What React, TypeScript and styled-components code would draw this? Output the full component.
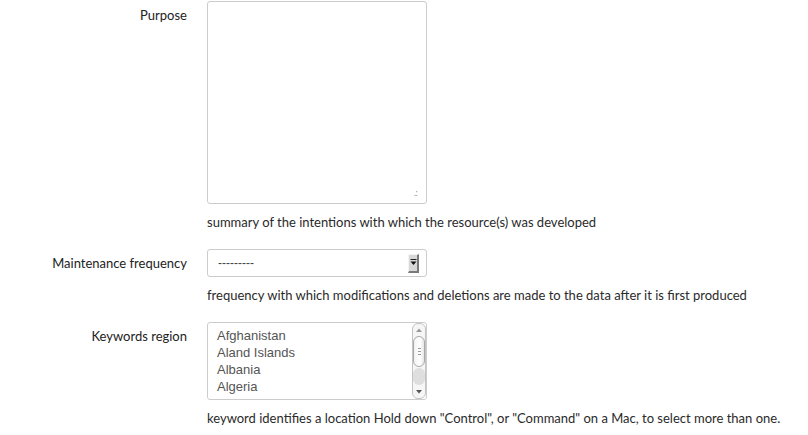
import styled, { createGlobalStyle } from "styled-components"

const GlobalStyle = createGlobalStyle`
  html, body {
    margin: 0;
    padding: 0;
    background: #fff;
  }
  body {
    font-family: Lato, "Open Sans", sans-serif;
    font-size: 13px;
    color: #333;
  }
`

const Form = styled.form`
  display: flex;
  flex-direction: column;
  gap: 18px;
  padding-top: 1px;
`

const Row = styled.div`
  display: grid;
  grid-template-columns: 187px 220px;
  column-gap: 20px;
  align-items: start;
`

const Label = styled.label`
  text-align: right;
  line-height: 18px;
  padding-top: 5px;
  color: #222;
`

const Field = styled.div`
  display: flex;
  flex-direction: column;
  gap: 9px;
`

const Help = styled.p`
  margin: 0;
  line-height: 18px;
  white-space: nowrap;
  color: #2a2a2a;
`

const AreaWrap = styled.div`
  position: relative;
  width: 220px;
  height: 203px;
`

const TextArea = styled.textarea`
  box-sizing: border-box;
  display: block;
  width: 100%;
  height: 100%;
  border: 1px solid #ccc;
  border-radius: 3px;
  resize: none;
  padding: 4px 6px;
  outline: none;
  font-family: "Liberation Sans", sans-serif;
`

const Grip = styled.span`
  position: absolute;
  right: 10px;
  bottom: 6px;
  font-family: "DejaVu Sans", sans-serif;
  font-size: 8px;
  line-height: 8px;
  color: #888;
  letter-spacing: -1px;
`

const SelectBox = styled.div`
  box-sizing: border-box;
  width: 220px;
  height: 28px;
  border: 1px solid #ccc;
  border-radius: 3px;
  display: flex;
  align-items: center;
  justify-content: space-between;
  padding: 0 7px 0 10px;
`

const SelectValue = styled.span`
  font-family: "Liberation Sans", sans-serif;
  font-size: 12px;
  color: #444;
`

const ArrowButton = styled.span`
  box-sizing: border-box;
  width: 11px;
  height: 19px;
  background: #d8d8d8;
  border-top: 1px solid #f4f4f4;
  border-left: 1px solid #f4f4f4;
  border-right: 2px solid #7a7a7a;
  border-bottom: 2px solid #7a7a7a;
  display: flex;
  align-items: center;
  justify-content: center;
`

const ListBox = styled.div`
  box-sizing: border-box;
  width: 220px;
  height: 78px;
  border: 1px solid #ccc;
  border-radius: 3px;
  display: flex;
  justify-content: space-between;
`

const Options = styled.ul`
  list-style: none;
  margin: 0;
  padding: 4px 0 0 9px;
`

const Option = styled.li`
  font-family: "Liberation Sans", sans-serif;
  font-size: 13px;
  line-height: 17px;
  color: #555;
`

const Scrollbar = styled.div`
  box-sizing: border-box;
  width: 14px;
  height: 76px;
  border: 1px solid #c4c4c4;
  border-radius: 6px;
  background: #f6f6f6;
  display: flex;
  flex-direction: column;
  align-items: center;
  overflow: hidden;
`

const ScrollStep = styled.div`
  height: 12px;
  width: 100%;
  display: flex;
  align-items: center;
  justify-content: center;
  flex: none;
`

const Thumb = styled.div`
  box-sizing: border-box;
  width: 12px;
  height: 31px;
  border: 1px solid #a8a8a8;
  border-radius: 6px;
  background: linear-gradient(to right, #f2f2f2, #ffffff 60%, #e6e6e6);
  display: flex;
  align-items: center;
  justify-content: center;
  flex: none;
`

const Track = styled.div`
  flex: 1;
  width: 12px;
  margin: 1px 0;
  border-radius: 6px;
  background: #dedede;
`

const GripLines = styled.span`
  display: flex;
  flex-direction: column;
  gap: 2px;
  > i {
    display: block;
    width: 3px;
    height: 1px;
    background: #999;
  }
`

const countries = ["Afghanistan", "Aland Islands", "Albania", "Algeria"]

const App = () => {
  return (
    <>
      <GlobalStyle />
      <Form>
        <Row>
          <Label>Purpose</Label>
          <Field>
            <AreaWrap>
              <TextArea />
              <Grip>.:</Grip>
            </AreaWrap>
            <Help>summary of the intentions with which the resource(s) was developed</Help>
          </Field>
        </Row>
        <Row>
          <Label>Maintenance frequency</Label>
          <Field>
            <SelectBox>
              <SelectValue>---------</SelectValue>
              <ArrowButton>
                <svg width="7" height="7" viewBox="0 0 7 7">
                  <rect x="0.5" y="0" width="6" height="1" fill="#222" />
                  <path d="M0.5 2.5 H6.5 L3.5 6 Z" fill="#111" />
                </svg>
              </ArrowButton>
            </SelectBox>
            <Help>frequency with which modifications and deletions are made to the data after it is first produced</Help>
          </Field>
        </Row>
        <Row>
          <Label>Keywords region</Label>
          <Field>
            <ListBox>
              <Options>
                {countries.map((c) => (
                  <Option key={c}>{c}</Option>
                ))}
              </Options>
              <Scrollbar>
                <ScrollStep>
                  <svg width="6" height="4" viewBox="0 0 6 4">
                    <path d="M0 4 L3 0.5 L6 4 Z" fill="#999" />
                  </svg>
                </ScrollStep>
                <Thumb>
                  <GripLines>
                    <i />
                    <i />
                    <i />
                  </GripLines>
                </Thumb>
                <Track />
                <ScrollStep>
                  <svg width="6" height="4" viewBox="0 0 6 4">
                    <path d="M0 0 L6 0 L3 3.5 Z" fill="#555" />
                  </svg>
                </ScrollStep>
              </Scrollbar>
            </ListBox>
            <Help>keyword identifies a location Hold down "Control", or "Command" on a Mac, to select more than one.</Help>
          </Field>
        </Row>
      </Form>
    </>
  )
}

export default App
